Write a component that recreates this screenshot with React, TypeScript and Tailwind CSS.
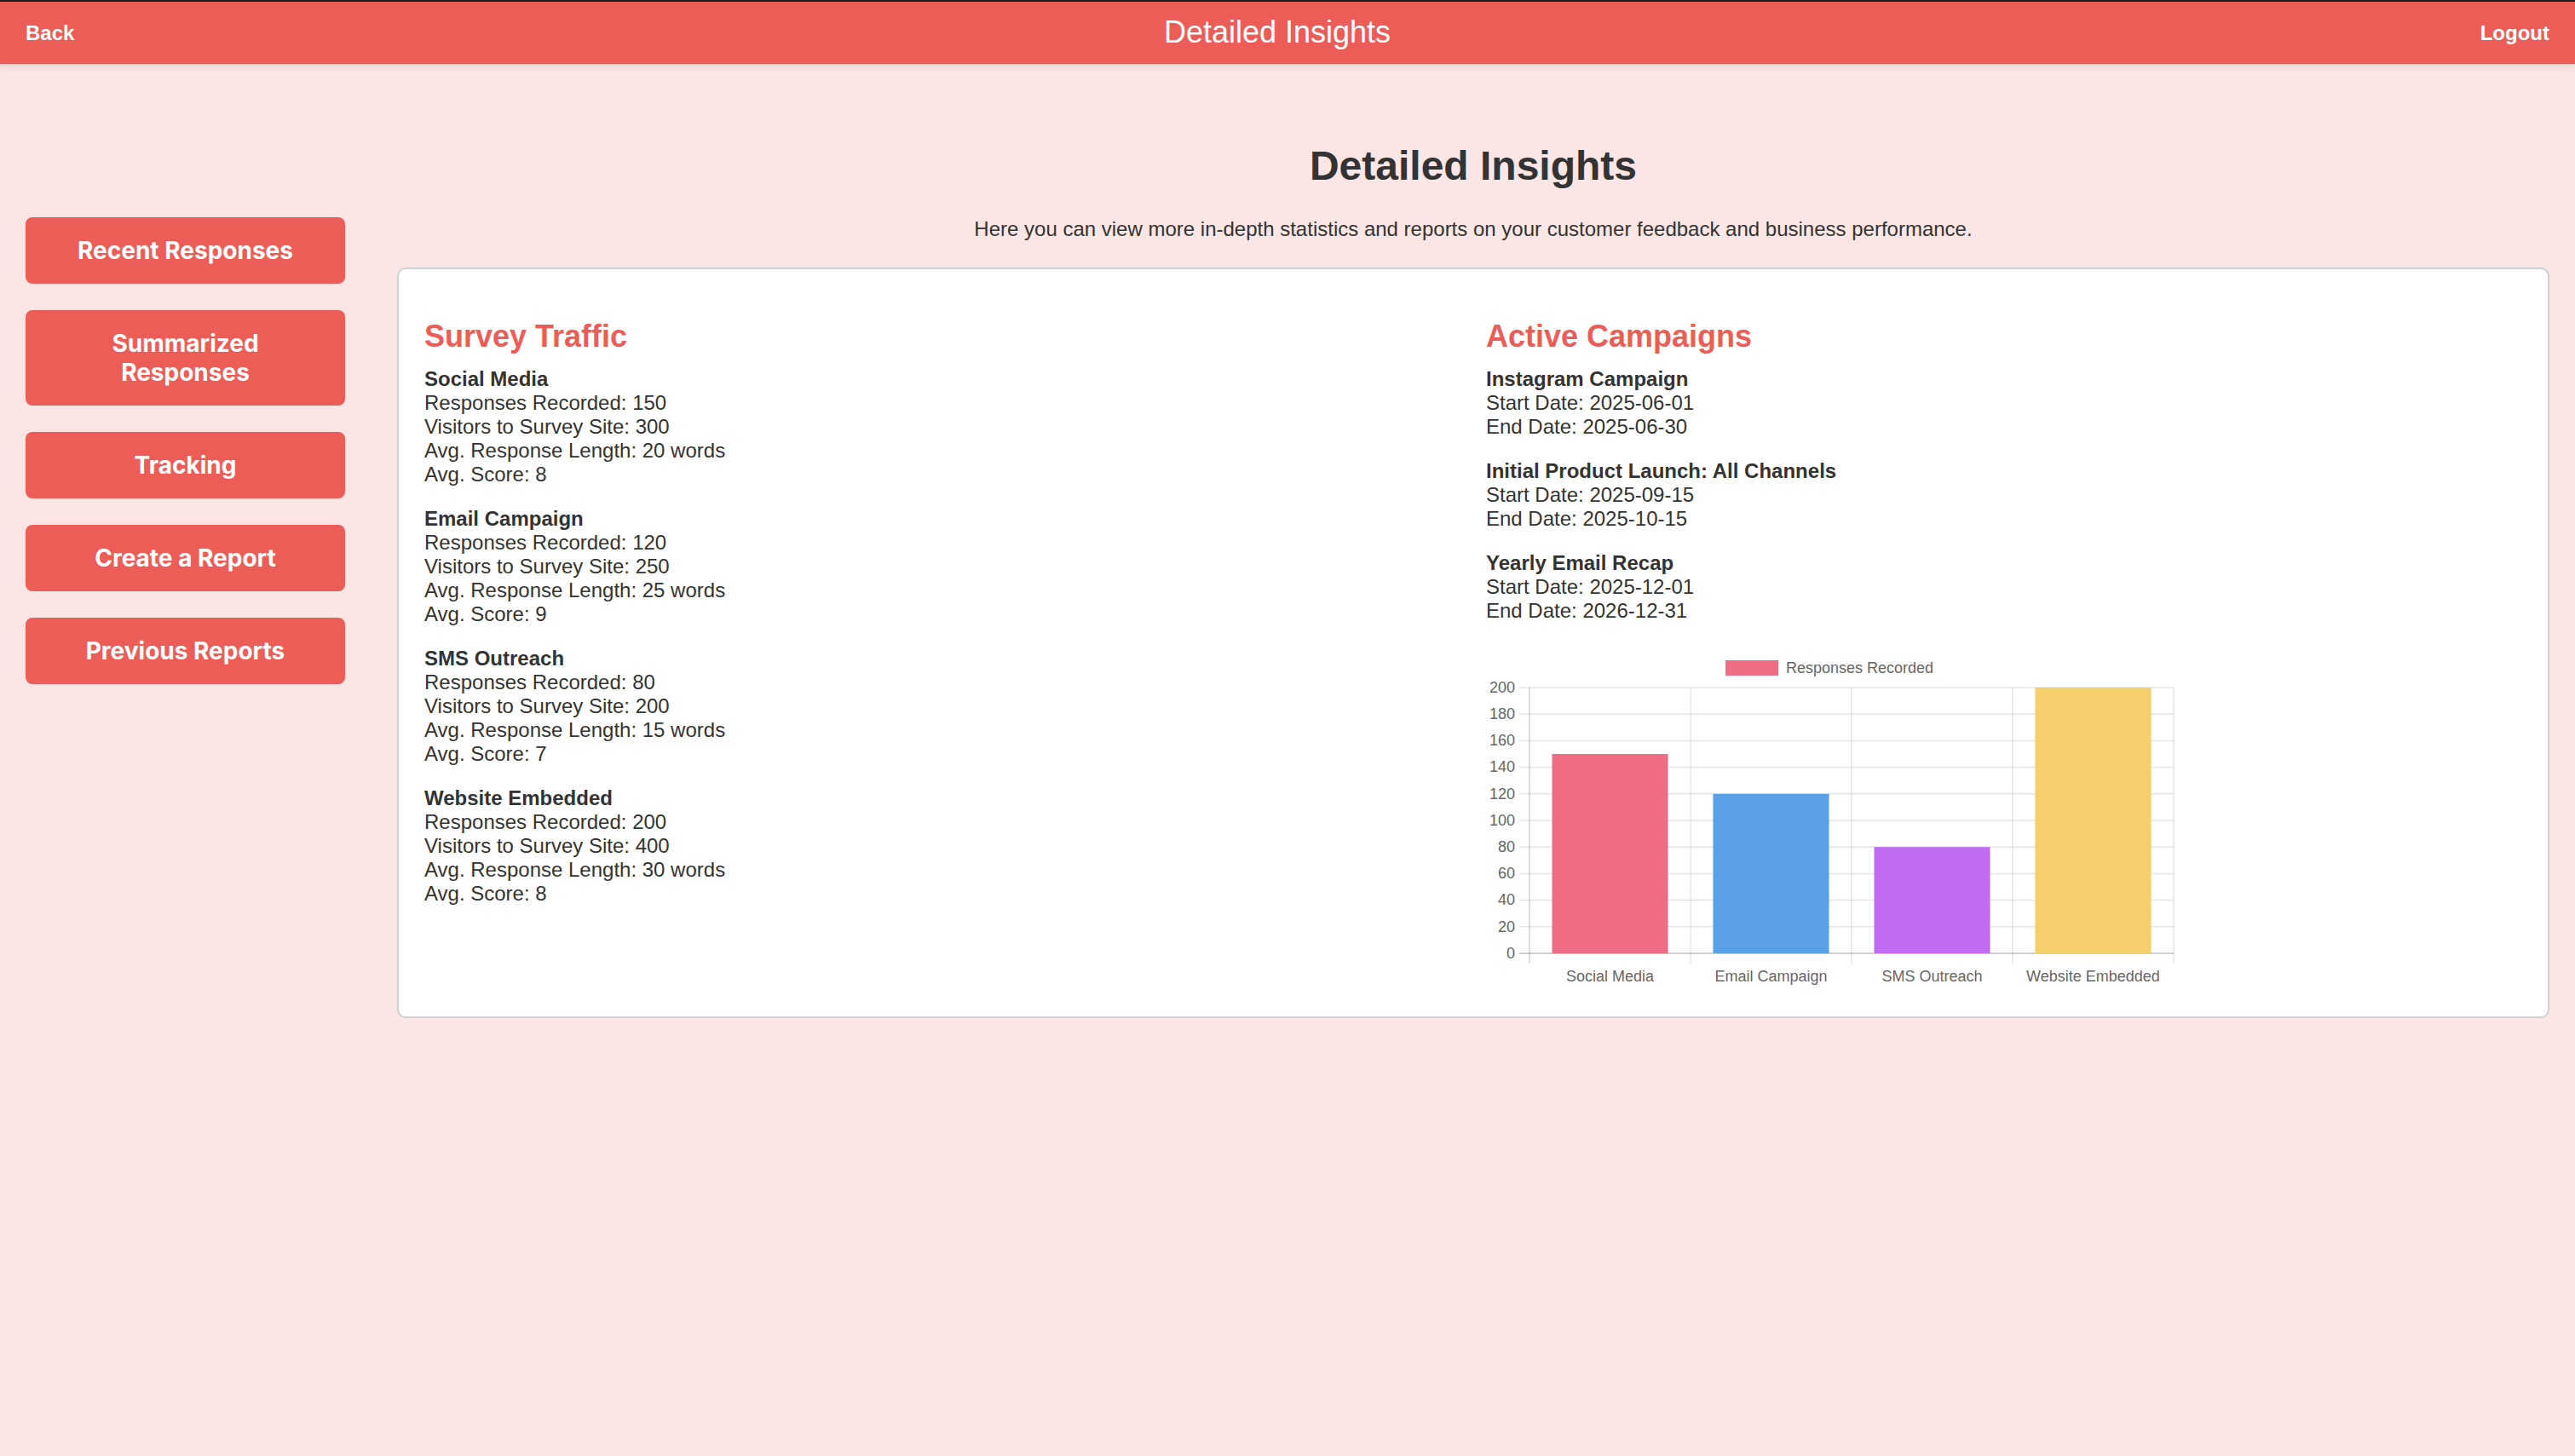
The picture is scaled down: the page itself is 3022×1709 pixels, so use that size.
import React from "react";

const traffic = [
  { name: "Social Media", rec: 150, vis: 300, len: 20, score: 8 },
  { name: "Email Campaign", rec: 120, vis: 250, len: 25, score: 9 },
  { name: "SMS Outreach", rec: 80, vis: 200, len: 15, score: 7 },
  { name: "Website Embedded", rec: 200, vis: 400, len: 30, score: 8 },
];

const campaigns = [
  { name: "Instagram Campaign", start: "2025-06-01", end: "2025-06-30" },
  { name: "Initial Product Launch: All Channels", start: "2025-09-15", end: "2025-10-15" },
  { name: "Yearly Email Recap", start: "2025-12-01", end: "2026-12-31" },
];

const bars = [
  { label: "Social Media", value: 150, color: "#EE6D85" },
  { label: "Email Campaign", value: 120, color: "#59A0E4" },
  { label: "SMS Outreach", value: 80, color: "#C06BF1" },
  { label: "Website Embedded", value: 200, color: "#F5CF6B" },
];

function Chart() {
  const left = 51;
  const right = 807;
  const top = 52;
  const bottom = 364;
  const catW = (right - left) / 4;
  const unit = (bottom - top) / 200;
  const ticks = [0, 20, 40, 60, 80, 100, 120, 140, 160, 180, 200];
  const font = "'Liberation Sans', Arial, sans-serif";
  return (
    <svg width={820} height={408} viewBox="0 0 820 408" className="block">
      <rect x={281} y={20} width={62} height={18} fill="#EE6D85" />
      <text x={352} y={30} fontSize={18} fill="#666" fontFamily={font} dominantBaseline="middle">
        Responses Recorded
      </text>
      {ticks.map((t) => {
        const y = bottom - t * unit;
        return (
          <g key={t}>
            <line
              x1={left - 12}
              x2={right}
              y1={y}
              y2={y}
              stroke={t === 0 ? "rgba(0,0,0,0.25)" : "rgba(0,0,0,0.1)"}
              strokeWidth={1.5}
            />
            <text
              x={34}
              y={y + 1}
              fontSize={18}
              fill="#666"
              fontFamily={font}
              textAnchor="end"
              dominantBaseline="middle"
            >
              {t}
            </text>
          </g>
        );
      })}
      {[0, 1, 2, 3, 4].map((i) => (
        <line
          key={i}
          x1={left + catW * i}
          x2={left + catW * i}
          y1={top}
          y2={bottom + 12}
          stroke={i === 0 ? "rgba(0,0,0,0.18)" : "rgba(0,0,0,0.1)"}
          strokeWidth={1.5}
        />
      ))}
      {bars.map((b, i) => {
        const w = catW * 0.72;
        const x = left + catW * i + (catW - w) / 2;
        const h = b.value * unit;
        return (
          <g key={b.label}>
            <rect x={x} y={bottom - h} width={w} height={h} fill={b.color} />
            <text
              x={left + catW * i + catW / 2}
              y={392}
              fontSize={18}
              fill="#666"
              fontFamily={font}
              textAnchor="middle"
              dominantBaseline="middle"
            >
              {b.label}
            </text>
          </g>
        );
      })}
    </svg>
  );
}

export default function App() {
  const navItems = ["Recent Responses", "Summarized Responses", "Tracking", "Create a Report", "Previous Reports"];
  return (
    <div
      className="min-h-[1709px] w-full bg-[#FBE6E5] text-[#333333]"
      style={{ fontFamily: "'Liberation Sans', Arial, Helvetica, sans-serif" }}
    >
      <header className="flex h-[75px] items-center justify-between border-t-2 border-[#1c1c1c] bg-[#EC5D58] px-[30px] text-white shadow-[0_4px_8px_rgba(0,0,0,0.08)]">
        <span className="text-[24px] font-bold leading-[28px]">Back</span>
        <span className="pb-[2px] text-[36px] leading-[41px]">Detailed Insights</span>
        <span className="text-[24px] font-bold leading-[28px]">Logout</span>
      </header>

      <div className="flex items-start gap-[61px] px-[30px] pt-[92px]">
        <nav className="mt-[88px] flex w-[375px] shrink-0 flex-col gap-[31px]">
          {navItems.map((item) => (
            <button
              key={item}
              className="rounded-[8px] bg-[#EC5D58] px-[40px] py-[22px] text-center text-[28px] font-bold leading-[34px] text-white"
              style={{ fontFamily: "Inter, 'Noto Sans', sans-serif" }}
            >
              {item}
            </button>
          ))}
        </nav>

        <main className="flex-1">
          <h1 className="text-center text-[48px] font-bold leading-[55px] text-[#333333]">Detailed Insights</h1>
          <p className="mt-[33px] text-center text-[24px] leading-[28px]">
            Here you can view more in-depth statistics and reports on your customer feedback and business performance.
          </p>

          <section className="mt-[31px] grid grid-cols-2 gap-[30px] rounded-[10px] border-2 border-[#D0D0D0] bg-white px-[30px] pb-[30px] pt-[58px]">
            <div>
              <h2 className="mb-[16px] text-[36px] font-bold leading-[41px] text-[#EC5D58]">Survey Traffic</h2>
              {traffic.map((t) => (
                <div key={t.name} className="mb-[24px] text-[24px] leading-[28px]">
                  <div className="font-bold">{t.name}</div>
                  <div>Responses Recorded: {t.rec}</div>
                  <div>Visitors to Survey Site: {t.vis}</div>
                  <div>Avg. Response Length: {t.len} words</div>
                  <div>Avg. Score: {t.score}</div>
                </div>
              ))}
            </div>
            <div>
              <h2 className="mb-[16px] text-[36px] font-bold leading-[41px] text-[#EC5D58]">Active Campaigns</h2>
              {campaigns.map((c) => (
                <div key={c.name} className="mb-[24px] text-[24px] leading-[28px]">
                  <div className="font-bold">{c.name}</div>
                  <div>Start Date: {c.start}</div>
                  <div>End Date: {c.end}</div>
                </div>
              ))}
              <Chart />
            </div>
          </section>
        </main>
      </div>
    </div>
  );
}
